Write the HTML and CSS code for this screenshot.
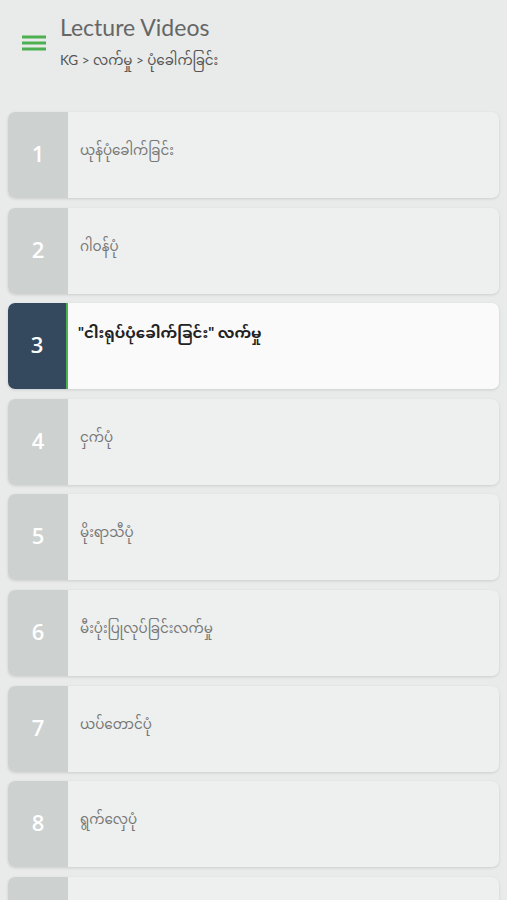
FILE: index.html
```html
<!DOCTYPE html>
<html lang="my">

<head>
    <meta charset="UTF-8">
    <meta name="viewport" content="width=device-width, initial-scale=1.0">
    <title>Lecture Videos</title>
    <link rel="stylesheet" href="styles.css">
</head>

<body>

    <div class="header">
        <svg class="menu-icon" width="24" height="18" viewBox="0 0 24 18">
            <rect x="0" y="1.5" width="24" height="3" fill="#4caf50"/>
            <rect x="0" y="7.5" width="24" height="3" fill="#4caf50"/>
            <rect x="0" y="13.5" width="24" height="3" fill="#4caf50"/>
        </svg>
        <div class="titles">
            <h1>Lecture Videos</h1>
            <div class="crumbs">KG &gt; လက်မှု &gt; ပုံခေါက်ခြင်း</div>
        </div>
    </div>

    <div class="list">
        <div class="item">
            <div class="num">1</div>
            <div class="label">ယုန်ပုံခေါက်ခြင်း</div>
        </div>
        <div class="item">
            <div class="num">2</div>
            <div class="label">ဂါဝန်ပုံ</div>
        </div>
        <div class="item active">
            <div class="num">3</div>
            <div class="label">"ငါးရုပ်ပုံခေါက်ခြင်း" လက်မှု</div>
        </div>
        <div class="item">
            <div class="num">4</div>
            <div class="label">ငှက်ပုံ</div>
        </div>
        <div class="item">
            <div class="num">5</div>
            <div class="label">မိုးရာသီပုံ</div>
        </div>
        <div class="item">
            <div class="num">6</div>
            <div class="label">မီးပုံးပြုလုပ်ခြင်းလက်မှု</div>
        </div>
        <div class="item">
            <div class="num">7</div>
            <div class="label">ယပ်တောင်ပုံ</div>
        </div>
        <div class="item">
            <div class="num">8</div>
            <div class="label">ရွက်လှေပုံ</div>
        </div>
        <div class="item">
            <div class="num"></div>
            <div class="label"></div>
        </div>
    </div>

</body>

</html>
```

FILE: styles.css
```css
body {
    font-family: Lato, "Noto Sans Myanmar", "Padauk", "Myanmar Text", "Noto Sans", sans-serif;
    margin: 0;
    padding: 0;
    background-color: #e8ebea;
    overflow: hidden;
    height: 900px;
}

.header {
    display: flex;
    align-items: center;
    padding: 12px 0 0 22px;
    height: 78px;
    box-sizing: border-box;
}

.menu-icon {
    margin-right: 14px;
    margin-top: -4px;
}

.titles h1 {
    margin: 0;
    margin-top: -2px;
    font-size: 23px;
    font-weight: 400;
    color: #666;
    line-height: 30px;
}

.crumbs {
    font-size: 13.5px;
    color: #555;
    margin-top: 5px;
}

.list {
    padding: 34px 8px 0 8px;
    display: flex;
    flex-direction: column;
    gap: 9.6px;
}

.item {
    display: flex;
    height: 86px;
    flex-shrink: 0;
    border-radius: 7px;
    overflow: hidden;
    background-color: #edf0ef;
    box-shadow: 0 1px 3px rgba(0, 0, 0, 0.12);
}

.num {
    width: 60px;
    flex-shrink: 0;
    display: flex;
    align-items: center;
    justify-content: center;
    padding-bottom: 4px;
    box-sizing: border-box;
    background-color: #cdd1d0;
    color: #fff;
    font-family: "Open Sans", sans-serif;
    font-weight: 600;
    font-size: 22px;
}

.label {
    padding: 25px 12px 0 12px;
    font-size: 13.5px;
    color: #777;
}

.item.active {
    background-color: #fafafa;
}

.item.active .num {
    background-color: #34495e;
    border-right: 2px solid #4caf50;
}

.item.active .label {
    padding-top: 15px;
    padding-left: 10px;
    font-size: 15px;
    color: #222;
    font-weight: 700;
}
```
